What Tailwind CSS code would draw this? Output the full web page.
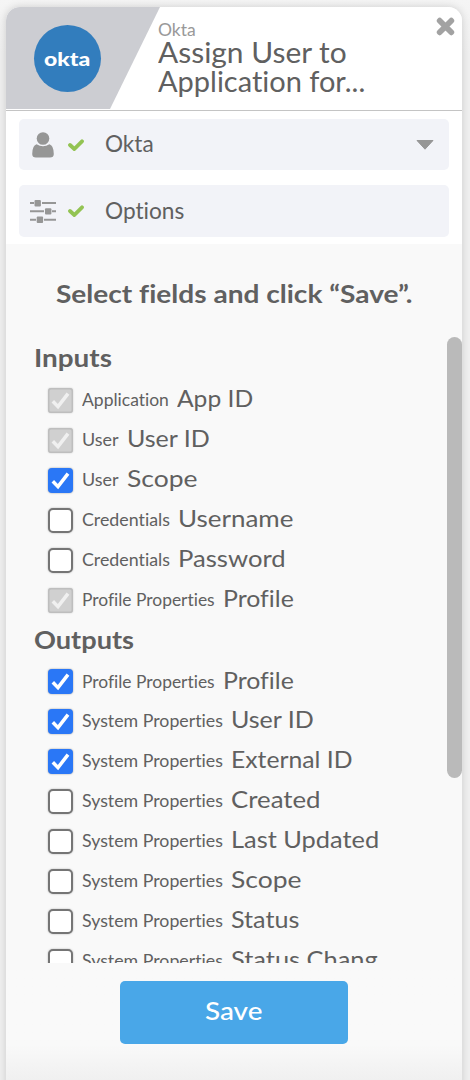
<!DOCTYPE html>
<html lang="en">
<head>
<meta charset="utf-8">
<title>Assign User to Application</title>
<script src="https://cdn.jsdelivr.net/npm/@tailwindcss/browser@4"></script>
</head>
<body class="h-[1080px] overflow-hidden bg-[#f0f0f0] font-['Lato','Open_Sans',sans-serif] text-[#606060] [font-variant-ligatures:none]">
<svg class="hidden">
  <symbol id="tick" viewBox="0 0 25 25"><path d="M4.8 13.2 10 18.6 20 5.6" fill="none" stroke="currentColor" stroke-width="3.5"/></symbol>
  <symbol id="ok" viewBox="0 0 16 12"><path d="M2 6 6.3 10 14 2.3" fill="none" stroke="#93c353" stroke-width="3.8" stroke-linecap="round" stroke-linejoin="miter"/></symbol>
</svg>
<div class="pt-[7px] pl-[6px] pr-2 bg-linear-to-b from-[#f5f5f5] to-[#f0f0f0] to-5%">
<main class="flex h-[1090px] flex-col overflow-hidden rounded-t-[14px] bg-[#f9f9f9] shadow-[0_0_8px_rgba(0,0,0,0.16)]">
  <header class="flex h-[104px] shrink-0 border-b border-[#c4c4c4] bg-white">
    <div class="flex h-[102px] w-[154px] shrink-0 items-center bg-[#cccdd2] pl-[28px] pt-[1px] [clip-path:polygon(0_0,100%_0,104px_100%,0_100%)]">
      <div class="flex size-[67px] items-center justify-center rounded-full bg-[#327dbd] text-[19.5px] font-black leading-none text-white"><span data-w="46">okta</span></div>
    </div>
    <div class="min-w-0 flex-1 whitespace-nowrap pt-[12px]">
      <div class="-ml-[2px] text-[18px] font-normal leading-[21px] text-[#999]"><span data-w="38">Okta</span></div>
      <h1 class="-ml-[2px] -mt-[2.5px] text-[28px] leading-[29px]"><span data-w="189">Assign User to</span><br><span data-w="207">Application for...</span></h1>
    </div>
    <svg class="mt-[10px] mr-[7px] size-[19px] shrink-0" viewBox="0 0 19 19"><path d="M3.7 3.7 15.3 15.3M15.3 3.7 3.7 15.3" stroke="#a2a2a2" stroke-width="5.8" stroke-linecap="round"/></svg>
  </header>
  <section class="flex h-[133px] shrink-0 flex-col gap-[15px] bg-white px-[13px] pt-[8px] text-[23.5px]">
    <div class="flex h-[51px] items-center rounded-[5px] bg-[#f2f3f8]">
      <svg class="ml-[13px] h-[26px] w-[22px]" viewBox="0 0 22 26" fill="#969696"><circle cx="11" cy="6.5" r="6.3"/><path d="M4.5 12.2Q11 16.2 17.5 12.2Q21.8 13.6 21.8 22Q21.8 25.6 18 25.6H4Q.2 25.6 .2 22Q.2 13.6 4.5 12.2Z"/></svg>
      <svg class="ml-[14px] h-[12px] w-[16px]"><use href="#ok"/></svg>
      <div class="ml-[20.5px] flex-1 pb-[2px]"><span data-w="49">Okta</span></div>
      <svg class="mr-[15px] h-[10px] w-[18px]" viewBox="0 0 18 10"><path d="M1 .5H17L9 9.2Z" fill="#969696" stroke="#969696" stroke-linejoin="round"/></svg>
    </div>
    <div class="flex h-[52px] items-center rounded-[5px] bg-[#f2f3f8]">
      <svg class="ml-[11px] h-[24px] w-[26px]" viewBox="0 0 26 24" fill="#969696"><path d="M0 3h4v2H0zM12 3h14v2H12zM0 11.2h14v2H0zM22 11.2h4v2h-4zM0 19.7h6v2H0zM14 19.7h12v2H14z"/><rect x="4.5" y="1" width="6.4" height="6.4" rx="1"/><rect x="15" y="9.2" width="6.4" height="6.4" rx="1"/><rect x="6.7" y="17.6" width="6.4" height="6.4" rx="1"/></svg>
      <svg class="ml-[12px] h-[12px] w-[16px]"><use href="#ok"/></svg>
      <div class="ml-[20.5px] pb-[1px]"><span data-w="79">Options</span></div>
    </div>
  </section>
  <h2 class="h-[93px] shrink-0 pl-[50px] pt-[34px] text-[25px] font-bold leading-[30px]"><span data-w="356">Select fields and click “Save”.</span></h2>
  <div class="flex h-[626px] shrink-0 overflow-hidden">
    <div class="w-[374px] overflow-hidden whitespace-nowrap pl-[28px]">
      <h3 class="h-[43px] pt-[5px] text-[25px] font-bold leading-[30px]"><span data-w="78">Inputs</span></h3>
      <ul id="inputs"></ul>
      <h3 class="h-[41px] pt-[4px] text-[25px] font-bold leading-[30px]"><span data-w="100">Outputs</span></h3>
      <ul id="outputs" class="[&>li:first-child>div]:-mt-[4px]"></ul>
    </div>
    <div class="ml-auto h-[441px] w-[15px] rounded-full bg-[#bababa]"></div>
  </div>
  <div class="flex h-[117px] shrink-0 justify-center bg-linear-to-b from-[#f9f9f9] from-70% to-[#f0f0f0] pt-[18px]">
    <button class="h-[63px] w-[228px] rounded-[5px] bg-[#49a7e8] pb-[3px] text-[25px] font-medium text-white"><span data-w="58">Save</span></button>
  </div>
</main>
</div>
<script>
const boxes = {
  on: '<i class="block size-[25px] shrink-0 rounded-[4px] bg-[#2a77f6] text-white shadow-[0_0_2px_rgba(0,0,0,0.4)]"><svg class="size-[25px]"><use href="#tick"/></svg></i>',
  locked: '<i class="block size-[25px] shrink-0 rounded-[3px] bg-[#d0d0d0] text-[#f0f0f0] shadow-[inset_0_0_0_1.5px_#bebebe,0_0_2px_rgba(0,0,0,0.2)]"><svg class="size-[25px]"><use href="#tick"/></svg></i>',
  off: '<i class="block size-[25px] shrink-0 rounded-[5px] border-2 border-[#757575] bg-white shadow-[0_0_2px_rgba(0,0,0,0.3)]"></i>'
};
const groupWidth = { 'Application': 87, 'User': 37, 'Credentials': 88.5, 'Profile Properties': 133, 'System Properties': 141 };
const row = ([state, group, name, width]) => `<li class="flex h-[40px] pl-[14px] pt-[8px]">${boxes[state]}<div class="-mt-[5px] ml-[8.5px] flex h-[24px] items-baseline leading-[30px]"><div class="relative -top-[1.5px] text-[16.5px]"><span data-w="${groupWidth[group]}">${group}</span></div><div class="ml-[8.5px] text-[23.5px]"><span data-w="${width}">${name}</span></div></div></li>`;
document.getElementById('inputs').innerHTML = [
  ['locked', 'Application', 'App ID', 76.5], ['locked', 'User', 'User ID', 83], ['on', 'User', 'Scope', 71],
  ['off', 'Credentials', 'Username', 115], ['off', 'Credentials', 'Password', 108], ['locked', 'Profile Properties', 'Profile', 71]
].map(row).join('');
document.getElementById('outputs').innerHTML = [
  ['on', 'Profile Properties', 'Profile', 71], ['on', 'System Properties', 'User ID', 83], ['on', 'System Properties', 'External ID', 121],
  ['off', 'System Properties', 'Created', 90], ['off', 'System Properties', 'Last Updated', 148], ['off', 'System Properties', 'Scope', 71],
  ['off', 'System Properties', 'Status', 68.5], ['off', 'System Properties', 'Status Chang', 147]
].map(row).join('');
// Stretch each label horizontally to its set width, again whenever its font size settles.
const fit = el => {
  const natural = el.offsetWidth, w = +el.dataset.w;
  if (!natural) return;
  el.style.transform = `scaleX(${w / natural})`;
  el.style.marginRight = `${w - natural}px`;
};
const watcher = new ResizeObserver(entries => entries.forEach(e => fit(e.target)));
for (const el of document.querySelectorAll('[data-w]')) {
  el.classList.add('inline-block', 'origin-left', 'whitespace-nowrap', 'shrink-0');
  watcher.observe(el);
}
addEventListener('load', () => document.querySelectorAll('[data-w]').forEach(fit));
</script>
</body>
</html>
